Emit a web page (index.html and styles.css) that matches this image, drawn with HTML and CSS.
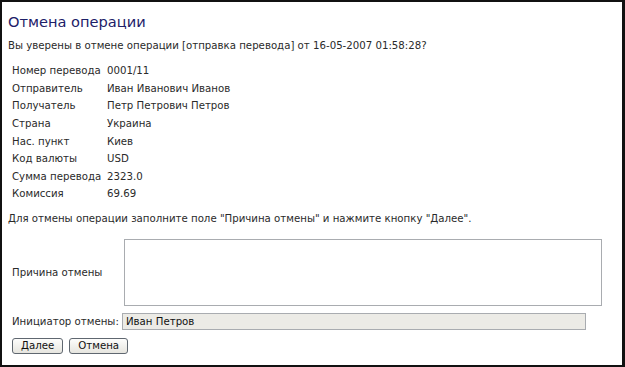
FILE: index.html
```html
<!DOCTYPE html>
<html lang="ru">
<head>
    <meta charset="UTF-8">
    <title>Отмена операции</title>
    <link rel="stylesheet" href="styles.css">
</head>
<body>
    <div class="page">
        <h1 class="page-title">Отмена операции</h1>
        <p class="question">Вы уверены в отмене операции [отправка перевода] от 16-05-2007 01:58:28?</p>

        <table class="details">
            <tr><td>Номер перевода</td><td>0001/11</td></tr>
            <tr><td>Отправитель</td><td>Иван Иванович Иванов</td></tr>
            <tr><td>Получатель</td><td>Петр Петрович Петров</td></tr>
            <tr><td>Страна</td><td>Украина</td></tr>
            <tr><td>Нас. пункт</td><td>Киев</td></tr>
            <tr><td>Код валюты</td><td>USD</td></tr>
            <tr><td>Сумма перевода</td><td>2323.0</td></tr>
            <tr><td>Комиссия</td><td>69.69</td></tr>
        </table>

        <p class="hint">Для отмены операции заполните поле "Причина отмены" и нажмите кнопку "Далее".</p>

        <form class="cancel-form">
            <div class="form-row reason-row">
                <label for="reason">Причина отмены</label>
                <textarea id="reason"></textarea>
            </div>
            <div class="form-row">
                <label for="initiator">Инициатор отмены:</label>
                <input type="text" id="initiator" value="Иван Петров" readonly>
            </div>
            <div class="buttons">
                <button type="button" class="btn">Далее</button>
                <button type="button" class="btn">Отмена</button>
            </div>
        </form>
    </div>
</body>
</html>
```

FILE: styles.css
```css
* {
    box-sizing: border-box;
    margin: 0;
    padding: 0;
}

body {
    background-color: #fff;
    font-family: "DejaVu Sans", Verdana, sans-serif;
    font-size: 10.2px;
    color: #2a2a2a;
}

.page {
    height: 367px;
    border: 2px solid #111;
    border-right-width: 3px;
    padding: 10px 6px 0 6px;
}

.page-title {
    font-size: 14.6px;
    font-weight: normal;
    color: #1d2068;
    line-height: 20px;
    margin-bottom: 6px;
}

.question {
    line-height: 16px;
    margin-bottom: 8px;
}

.details {
    border-collapse: collapse;
    margin-left: 2px;
    margin-bottom: 8px;
}

.details td {
    padding: 0 2px;
    height: 17.6px;
    white-space: nowrap;
}

.details td:first-child {
    width: 95px;
}

.hint {
    line-height: 16px;
    margin-bottom: 12px;
}

.form-row {
    display: flex;
    align-items: center;
    margin-left: 4px;
}

.form-row label {
    width: 110px;
    white-space: nowrap;
}

.reason-row {
    margin-bottom: 7px;
}

.reason-row label {
    width: 112px;
}

.form-row textarea {
    width: 478px;
    height: 67px;
    border: 1px solid #a9acb0;
    resize: none;
    font-family: inherit;
}

.form-row input {
    width: 464px;
    height: 17px;
    border: 1px solid #a9acb0;
    background-color: #ecebe6;
    font-family: inherit;
    font-size: 10.2px;
    padding: 0 3px;
    color: #111;
}

.buttons {
    display: flex;
    gap: 6px;
    margin: 8px 0 0 4px;
}

.btn {
    height: 16px;
    padding: 0 8px;
    border: 1px solid #5f6770;
    border-radius: 3px;
    background: linear-gradient(#fdfdfc, #e6e5df);
    font-family: inherit;
    font-size: 10.2px;
    color: #111;
    line-height: 14px;
}
```
